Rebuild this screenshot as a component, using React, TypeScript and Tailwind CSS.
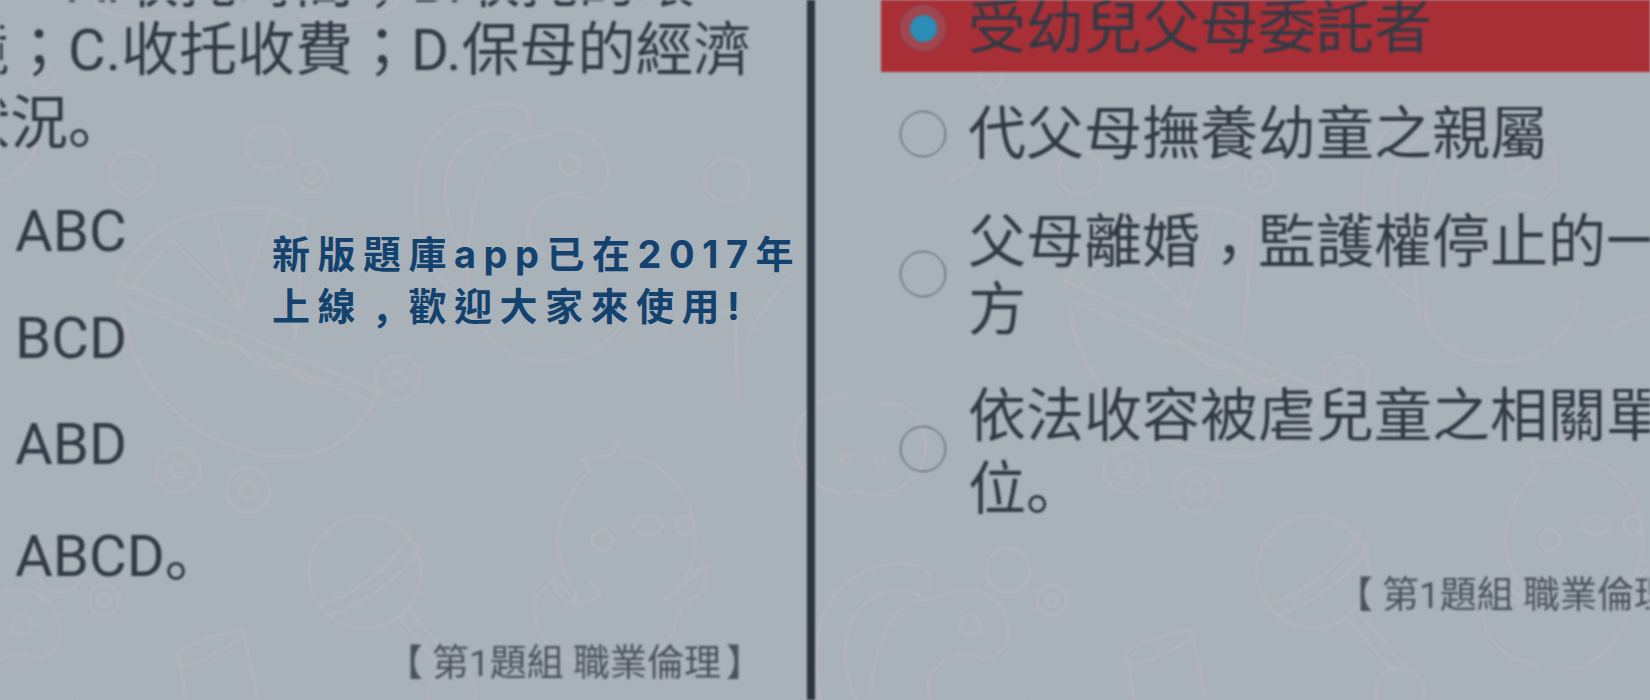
import React from 'react';

const LINE = "h-[68px] leading-[68px] whitespace-nowrap";

const Rattle: React.FC = () => (
  <>
    <path d="M470 300 C420 280 412 220 418 175 C426 125 470 100 510 104 C540 107 525 125 532 130" />
    <path d="M480 270 C445 240 438 190 452 160 C470 130 500 122 520 136" />
    <path d="M472 320 C462 260 470 190 495 155 C515 135 535 140 545 135 C565 122 600 130 608 165 C612 190 590 205 575 195" />
    <circle cx="570" cy="165" r="10" />
    <path d="M575 195 C545 190 520 215 530 240 C545 270 600 270 625 240" />
    <path d="M480 295 C470 320 490 350 530 360 C580 370 625 340 630 300" />
  </>
);

const Bubbles: React.FC = () => (
  <>
    <circle cx="268" cy="147" r="22" />
    <circle cx="312" cy="177" r="15" />
    <circle cx="312" cy="177" r="6" />
  </>
);

const Pattern: React.FC = () => (
  <>
    <Bubbles />
    <g transform="translate(-208 423)"><Bubbles /></g>
    <Rattle />
    <g transform="translate(-548 460)"><Rattle /></g>
    <circle cx="132" cy="173" r="22" />
    <circle cx="727" cy="180" r="22" />
    {/* stroller */}
    <path d="M118 286 C130 240 175 205 270 208 L305 222 L295 340" />
    <path d="M130 288 L172 240 L240 310 L215 218 L240 310 L270 212" />
    <path d="M116 280 L380 392" />
    <path d="M122 300 L372 402" />
    <path d="M200 334 C210 345 225 345 230 338 C250 362 270 372 285 365 C300 385 320 385 330 378" />
    <path d="M122 310 C135 400 215 462 300 456 C340 452 362 425 378 395" />
    <circle cx="398" cy="378" r="22" />
    <circle cx="398" cy="378" r="8" />
    <circle cx="178" cy="470" r="22" />
    <circle cx="178" cy="470" r="8" />
    <circle cx="248" cy="490" r="22" />
    <circle cx="248" cy="490" r="8" />
    {/* lollipop */}
    <circle cx="365" cy="572" r="56" />
    <path d="M322 604 C355 595 395 565 412 530" />
    <path d="M330 615 C370 600 405 575 420 545" />
    <path d="M400 618 L445 672" />
    <path d="M410 610 L455 665" />
    <circle cx="452" cy="692" r="24" />
    {/* strawberry */}
    <path d="M582 460 L612 455 L617 440 L624 456 C670 460 695 500 695 540 C695 570 680 590 665 600" />
    <path d="M582 460 L590 470 C565 495 552 530 560 560 C565 580 580 590 575 600 L555 578 C545 590 535 595 535 600" />
    <path d="M553 578 C555 605 580 610 600 595 L590 580" />
    <path d="M665 600 L705 565 C710 590 695 600 680 605" />
    <path d="M535 600 C530 640 560 660 590 665" />
    <path d="M680 610 C672 645 650 665 620 670" />
    <circle cx="602" cy="540" r="10" />
    <ellipse cx="648" cy="525" rx="14" ry="9" />
    <circle cx="685" cy="525" r="9" />
    {/* bag */}
    <path d="M178 655 C180 645 215 635 243 630 L262 720" />
    <path d="M178 655 C175 675 205 660 240 640" />
    <path d="M178 655 L190 720" />
    <path d="M665 330 C672 318 705 315 735 310 L738 400" />
    {/* bear with face */}
    <path d="M850 398 C815 390 790 420 795 450 C800 485 840 500 855 490 C870 500 915 495 925 455 C930 425 905 395 880 405" />
    <circle cx="845" cy="458" r="5" />
    <circle cx="880" cy="462" r="5" />
    {/* corner scraps */}
    <circle cx="43" cy="77" r="12" />
    <path d="M0 180 C25 175 42 150 38 120" />
    <path d="M95 5 C125 25 190 25 225 0" />
    <path d="M300 15 C345 28 385 18 400 0" />
    <path d="M790 275 C770 300 755 320 745 345" />
  </>
);

const Doodles: React.FC = () => (
  <svg
    className="absolute inset-0 h-[700px] w-[1650px]"
    viewBox="0 0 1650 700"
    fill="none"
    stroke="#b2b5bc"
    strokeWidth="3"
    strokeLinecap="round"
    strokeLinejoin="round"
  >
    <Pattern />
    <g transform="translate(948 0)"><Pattern /></g>
  </svg>
);

const Radio: React.FC<{ checked?: boolean }> = ({ checked }) =>
  checked ? (
    <span className="flex h-[46px] w-[46px] shrink-0 items-center justify-center rounded-full bg-[#a0464f] ring-1 ring-[#8b3a44]">
      <span className="h-[27px] w-[27px] rounded-full bg-[#2b8db5]" />
    </span>
  ) : (
    <span className="block h-[46px] w-[46px] shrink-0 rounded-full border-[1.5px] border-[#454c56]" />
  );

const Low: React.FC<{ children: React.ReactNode }> = ({ children }) => (
  <span className="inline-block translate-y-[14px]">{children}</span>
);

const Dot: React.FC = () => <span className="font-['Noto_Sans_CJK_SC',sans-serif]">。</span>;

const Footer: React.FC = () => (
  <>
    <span className="mr-[9px]">【</span>第1題組 職業倫理<span className="ml-[5px]">】</span>
  </>
);

export default function App() {
  return (
    <div className="relative h-[700px] w-full overflow-hidden bg-[#a9b1b9] font-['Roboto','Noto_Sans_CJK_TC',sans-serif] text-[58px] text-[#323a45]">
      <div className="flex h-full blur-[0.8px]">
        <Doodles />
        {/* left page */}
        <div className="relative flex w-[807px] shrink-0 flex-col overflow-hidden">
          <div className="-mt-[52px] -ml-[48px]">
            <div className={`${LINE} pl-[58px]`}>：A.收托時間；B.收托的環</div>
            <div className={LINE}>境；C.收托收費；D.保母的經濟</div>
            <div className={LINE}>狀況<Dot /></div>
          </div>
          <div className="mt-[45px] ml-[15px] flex flex-col gap-[38.5px]">
            <div className={LINE}>ABC</div>
            <div className={LINE}>BCD</div>
            <div className={LINE}>ABD</div>
            <div className={LINE}>ABCD<Dot /></div>
          </div>
          <div className="mt-[54px] ml-[386px] text-[37px] leading-[50px] whitespace-nowrap text-[#4a525d]">
            <Footer />
          </div>
        </div>

        <div className="relative w-2 shrink-0 bg-[#2b3440]" />

        {/* right page */}
        <div className="relative flex-1 overflow-hidden">
          <div className="-mt-[16px] ml-[66px] flex items-center gap-[22px] bg-[#a92f37] py-[10px] pl-[19px]">
            <Radio checked />
            <div className={LINE}>受幼兒父母委託者</div>
          </div>
          <div className="mt-[18px] ml-[85px] flex items-center gap-[22px] py-[10px]">
            <Radio />
            <div className={LINE}>代父母撫養幼童之親屬</div>
          </div>
          <div className="mt-[18px] ml-[85px] flex items-center gap-[22px] py-[10px]">
            <Radio />
            <div className="translate-y-[2px]">
              <div className={LINE}>父母離婚<Low>，</Low>監護權停止的一</div>
              <div className={LINE}>方</div>
            </div>
          </div>
          <div className="mt-[19px] ml-[85px] flex items-center gap-[22px] py-[10px]">
            <Radio />
            <div className="translate-y-[1px]">
              <div className={LINE}>依法收容被虐兒童之相關單</div>
              <div className={LINE}>位<Dot /></div>
            </div>
          </div>
          <div className="mt-[44px] ml-[521px] text-[37px] leading-[50px] whitespace-nowrap text-[#4a525d]">
            <Footer />
          </div>
        </div>
      </div>

      <div className="absolute top-[228px] left-[272px] text-[38px] leading-[52px] font-bold tracking-[7.5px] whitespace-nowrap text-[#13426e] font-['Inter','Noto_Sans_CJK_TC',sans-serif]">
        <div>新版題庫app已在2017年</div>
        <div>上線<Low>，</Low>歡迎大家來使用!</div>
      </div>
    </div>
  );
}
